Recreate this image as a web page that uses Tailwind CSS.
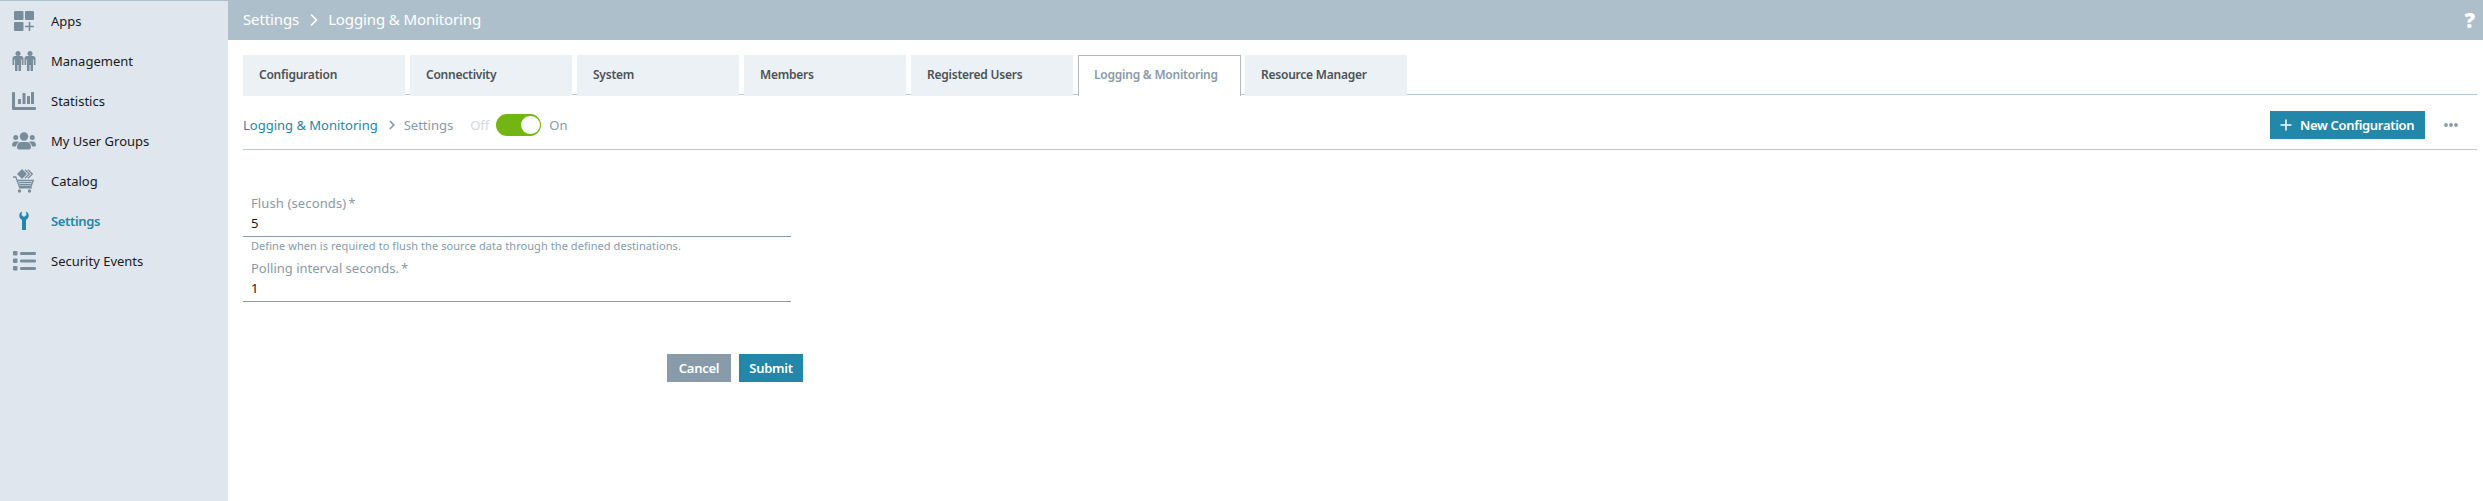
<!DOCTYPE html>
<html lang="en">
<head>
<meta charset="utf-8">
<title>Logging &amp; Monitoring</title>
<script src="https://cdn.jsdelivr.net/npm/@tailwindcss/browser@4"></script>
</head>
<body class="bg-white">
<div class="flex h-[501px] w-[2483px] overflow-hidden whitespace-nowrap font-['Noto_Sans',sans-serif] text-[13px] leading-5">
  <nav class="flex w-[228px] shrink-0 flex-col border-t border-[#aebfcc] bg-[#dfe6ed] leading-[22px] text-[#1a1a1a]">
    <a class="flex h-10 items-center gap-[15px] pl-3"><svg class="size-6 text-[#788d9b]" viewBox="0 0 24 24" fill="currentColor"><rect x="2" y="2" width="9.500" height="9" rx="1"/><rect x="13" y="2" width="9" height="9" rx="1"/><rect x="2" y="13" width="9.500" height="9" rx="1"/><path d="M16.700 13h1.600v3.700H22v1.600h-3.700V22h-1.600v-3.700H13v-1.600h3.700z"/></svg><span>Apps</span></a>
    <a class="flex h-10 items-center gap-[15px] pl-3"><svg class="size-6 text-[#788d9b]" viewBox="0 0 24 24" fill="currentColor"><g id="person"><circle cx="6" cy="4.500" r="2.500"/><path d="M3 7h6q2.500 0 2.500 2.500V16h-1.700v-5.500h-.8V22H6.500v-6h-1v6H3V10.500h-.8V16H.5V9.500Q.5 7 3 7z"/></g><use href="#person" x="12"/></svg><span>Management</span></a>
    <a class="flex h-10 items-center gap-[15px] pl-3"><svg class="size-6 text-[#788d9b]" viewBox="0 0 24 24" fill="currentColor"><path d="M1 3h1q1 0 1 1v14h20q1 0 1 1v1q0 1-1 1H1q-1 0-1-1V4q0-1 1-1z"/><rect x="6" y="10" width="3" height="5" rx=".5"/><rect x="10.500" y="4" width="3" height="11" rx=".5"/><rect x="15" y="7" width="3" height="8" rx=".5"/><rect x="19" y="3" width="3" height="12" rx=".5"/></svg><span>Statistics</span></a>
    <a class="flex h-10 items-center gap-[15px] pl-3"><svg class="size-6 text-[#788d9b]" viewBox="0 0 24 24" fill="currentColor"><circle cx="12" cy="7.500" r="4.200"/><circle cx="3.700" cy="8.500" r="2.500"/><circle cx="20.300" cy="8.500" r="2.500"/><path d="M8.500 13h7q3.500 1 3.500 5.500Q19 20.500 17 20.500H7q-2 0-2-2Q5 14 8.500 13zM2 12.500h4l1 .5q-3 2-3 4.500H1q-1 0-1-1 0-3 2-4zM22 12.500h-4l-1 .5q3 2 3 4.500h3q1 0 1-1 0-3-2-4z"/></svg><span>My User Groups</span></a>
    <a class="flex h-10 items-center gap-[15px] pl-3"><svg class="size-6 text-[#788d9b]" viewBox="0 0 24 24" fill="currentColor"><path d="M5 5 10 0l5 5-5 5z"/><path d="m13 .7 4.300 4.300L13 9.300M16 .7 20.300 5 16 9.300" fill="none" stroke="currentColor" stroke-width="1.300"/><path d="M1 8h2.800l4 10.800H20M5.300 11.500h16l-2.500 6H7.500M7 13.700h12.500M7.700 15.700h11" fill="none" stroke="currentColor" stroke-width="1.300"/><circle cx="7.500" cy="22" r="1.700"/><circle cx="17.500" cy="22" r="1.700"/></svg><span>Catalog</span></a>
    <a class="flex h-10 items-center gap-[15px] pl-3"><svg class="size-6 text-[#2387aa]" viewBox="0 0 24 24" fill="currentColor"><path d="M10 2.500 9.500 6l2.500 2 2.500-2-.5-3.500q3 1.500 2.700 4.800-.3 2.500-2.700 3.700V21h-4V11Q7.500 9.800 7.300 7.300 7 4 10 2.500z"/></svg><span class="font-semibold tracking-[-0.35px] text-[#2387aa]">Settings</span></a>
    <a class="flex h-10 items-center gap-[15px] pl-3"><svg class="size-6 text-[#788d9b]" viewBox="0 0 24 24" fill="currentColor"><rect x="1" y="2" width="4.500" height="4.500" rx="1"/><rect x="1" y="9.500" width="4.500" height="4.500" rx="1"/><rect x="1" y="17" width="4.500" height="4.500" rx="1"/><rect x="8" y="3" width="16" height="3" rx="1.300"/><rect x="8" y="10.500" width="16" height="3" rx="1.300"/><rect x="8" y="18" width="16" height="3" rx="1.300"/></svg><span>Security Events</span></a>
  </nav>
  <main class="flex min-w-0 flex-1 flex-col">
    <header class="flex h-10 shrink-0 items-center bg-[#aebfcc] pl-[15px] pr-2 text-[15px] tracking-[-0.12px] text-white">
      <span class="pb-0.5">Settings</span>
      <svg class="ml-[11px] mr-[10px] h-[14px] w-2" viewBox="0 0 8 14" fill="none" stroke="currentColor" stroke-width="1.600"><path d="m1 1.500 5.500 5.500L1 12.500"/></svg>
      <span class="pb-0.5">Logging &amp; Monitoring</span>
      <span class="ml-auto text-[21px] font-black leading-none">?</span>
    </header>
    <div class="ml-[15px] mr-1.5 flex flex-col">
      <div class="mt-[15px] flex h-10 gap-[5px] border-b border-[#b9c8d5] text-[12px] font-semibold tracking-[-0.23px] text-[#4d5256]">
        <div class="flex h-[41px] w-[162px] items-center bg-[#ebf1f5] pb-[2px] pl-4">Configuration</div>
        <div class="flex h-[41px] w-[162px] items-center bg-[#ebf1f5] pb-[2px] pl-4">Connectivity</div>
        <div class="flex h-[41px] w-[162px] items-center bg-[#ebf1f5] pb-[2px] pl-4">System</div>
        <div class="flex h-[41px] w-[162px] items-center bg-[#ebf1f5] pb-[2px] pl-4">Members</div>
        <div class="flex h-[41px] w-[162px] items-center bg-[#ebf1f5] pb-[2px] pl-4">Registered Users</div>
        <div class="-mr-px flex h-[41px] w-[163px] items-center border border-b-0 border-[#b5b9bc] bg-white pb-[3px] pl-[15px] text-[#879baa]">Logging &amp; Monitoring</div>
        <div class="flex h-[41px] w-[162px] items-center bg-[#ebf1f5] pb-[2px] pl-4">Resource Manager</div>
      </div>
      <div class="flex h-[55px] items-center border-b border-[#b9c8d5] pt-[6px] text-[#879baa]">
        <span class="text-[#2387aa]">Logging &amp; Monitoring</span>
        <svg class="ml-[11px] mr-[9px] h-[10px] w-1.5" viewBox="0 0 6 10" fill="none" stroke="currentColor" stroke-width="1.700"><path d="m.8 1 4 4-4 4"/></svg>
        <span>Settings</span>
        <span class="ml-[17px] text-[#cfd9e0]">Off</span>
        <span class="ml-[7px] flex h-[22px] w-[45px] items-center justify-end rounded-full bg-[#73b512] pr-[1.500px]"><span class="size-[18.500px] rounded-full bg-white"></span></span>
        <span class="ml-[8px]">On</span>
        <button class="ml-auto flex h-7 w-[155px] items-center bg-[#2387aa] pl-[10px] font-semibold tracking-[-0.32px] text-white"><svg class="mr-[8px] size-3" viewBox="0 0 12 12" stroke="currentColor" stroke-width="1.500"><path d="M6 .5v11M.5 6h11"/></svg>New Configuration</button>
        <svg class="ml-[19px] mr-[19px] h-1 w-[14px]" viewBox="0 0 14 4" fill="currentColor"><circle cx="2" cy="2" r="1.900"/><circle cx="7" cy="2" r="1.900"/><circle cx="12" cy="2" r="1.900"/></svg>
      </div>
      <form class="flex flex-col pt-[42px] text-[#879baa]">
        <div class="flex h-[45px] w-[548px] flex-col border-b border-[#879baa] pl-2">
          <label class="h-[21px] leading-[22px] tracking-[0.12px]">Flush (seconds)<span class="ml-[2px]">*</span></label>
          <span class="h-[21px] leading-[20px] text-[#1a1a1a]">5</span>
        </div>
        <p class="h-5 pl-2 text-[11px] leading-[17px] tracking-[0.065px]">Define when is required to flush the source data through the defined destinations.</p>
        <div class="flex h-[45px] w-[548px] flex-col border-b border-[#879baa] pl-2">
          <label class="h-[21px] leading-[22px]">Polling interval seconds.<span class="ml-[2px]">*</span></label>
          <span class="h-[21px] leading-[20px] text-[#1a1a1a]">1</span>
        </div>
        <div class="mt-[52px] flex w-[560px] justify-end gap-2 font-semibold tracking-[-0.28px] text-white">
          <button type="button" class="h-7 w-16 bg-[#879baa]">Cancel</button>
          <button type="button" class="h-7 w-16 bg-[#2387aa]">Submit</button>
        </div>
      </form>
    </div>
  </main>
</div>
</body>
</html>
